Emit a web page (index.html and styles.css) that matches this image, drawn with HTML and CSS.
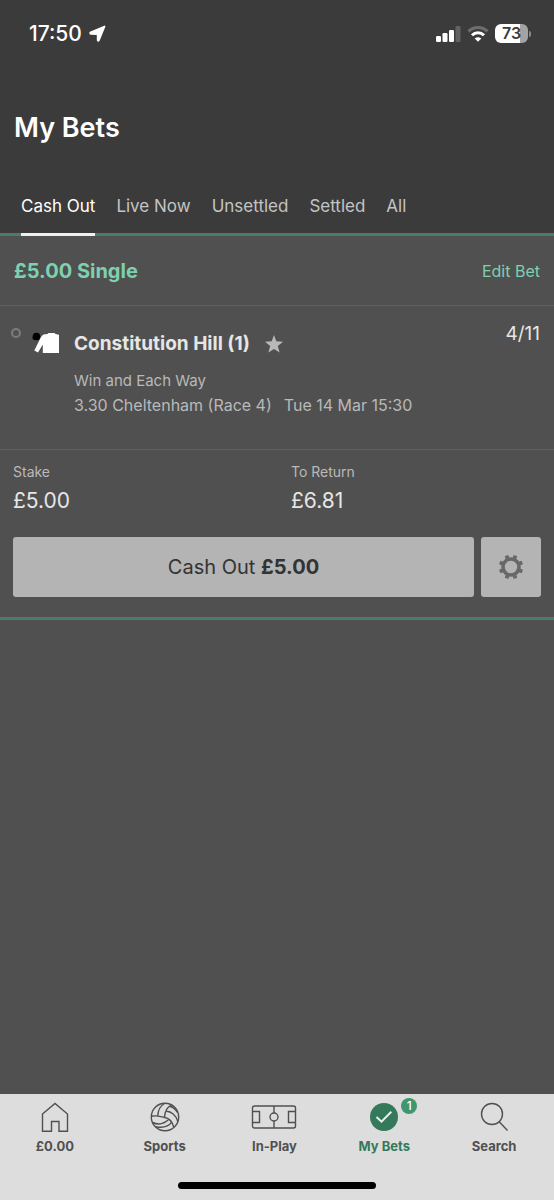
FILE: index.html
```html
<!DOCTYPE html>
<html lang="en">
<head>
  <meta charset="UTF-8">
  <meta name="viewport" content="width=device-width, initial-scale=1.0">
  <title>My Bets</title>
  <link rel="stylesheet" href="styles.css">
</head>
<body>
  <header class="header">
    <div class="status-bar">
      <div class="status-left">
        <span class="time">17:50</span>
        <svg width="17" height="17" viewBox="0 0 17 17" aria-hidden="true">
          <path d="M15.6 1.4 10 15.2Q9 16.6 8.6 15V9.2L1.8 9Q0.4 8.200 1.7 7.200Z" fill="#fff" stroke="#fff" stroke-width="1.600" stroke-linejoin="round"/>
        </svg>
      </div>
      <div class="status-right">
        <svg width="26" height="17" viewBox="0 0 26 17" aria-hidden="true">
          <rect x="1" y="11" width="5" height="6" rx="1.2" fill="#fff"/>
          <rect x="7.5" y="8" width="5" height="9" rx="1.2" fill="#fff"/>
          <rect x="14" y="5" width="5" height="12" rx="1.2" fill="#fff"/>
          <rect x="20.5" y="1" width="5" height="16" rx="1.2" fill="#626262"/>
        </svg>
        <svg width="22" height="17" viewBox="0 0 22 17" fill="none" stroke-width="3" aria-hidden="true">
          <path d="M1.5 6.4A13.4 13.4 0 0 1 20.5 6.4" stroke="#6e6e6e"/>
          <path d="M5 10.2A8.500 8.500 0 0 1 17 10.2" stroke="#fff"/>
          <path d="M11 16.8 7.7 13.4Q11 11 14.3 13.4Z" fill="#fff"/>
        </svg>
        <div class="battery"><span>73</span></div>
      </div>
    </div>
    <h1>My Bets</h1>
    <nav class="tabs">
      <a href="#" class="tab active">Cash Out</a>
      <a href="#" class="tab">Live Now</a>
      <a href="#" class="tab">Unsettled</a>
      <a href="#" class="tab">Settled</a>
      <a href="#" class="tab">All</a>
    </nav>
  </header>

  <main class="content">
    <section class="bet">
      <div class="bet-header">
        <h2>£5.00 Single</h2>
        <button type="button" class="edit-bet">Edit Bet</button>
      </div>

      <div class="selection">
        <span class="marker"></span>
        <svg class="silk" width="28" height="22" viewBox="0 0 28 22" aria-hidden="true">
          <circle cx="4.5" cy="4.5" r="3.8" fill="#000"/>
          <path d="M0.2 6 4 2 5 8 2 8Z" fill="#000"/>
          <path d="M11.5 2.5 15.5 2 16.5 1 22.5 1 23.5 2 27 2.8V21H10.8V12.500L6 20.5 2.3 18.5 8.5 6Q9.5 3.5 11.5 2.5Z" fill="#fff"/>
        </svg>
        <div class="selection-info">
          <div class="runner">
            <h3>Constitution Hill (1)</h3>
            <svg width="18" height="18" viewBox="0 0 18 18" aria-hidden="true">
              <path d="M9 0 11.3 6.3 18 6.7 12.8 10.9 14.6 17.600 9 14 3.4 17.600 5.2 10.9 0 6.7 6.7 6.3Z" fill="#b9b9b9"/>
            </svg>
          </div>
          <p class="market">Win and Each Way</p>
          <p class="event"><span>3.30 Cheltenham (Race 4)</span><span>Tue 14 Mar 15:30</span></p>
        </div>
        <span class="odds">4/11</span>
      </div>

      <div class="bet-footer">
        <dl class="amounts">
          <div>
            <dt>Stake</dt>
            <dd>£5.00</dd>
          </div>
          <div>
            <dt>To Return</dt>
            <dd>£6.81</dd>
          </div>
        </dl>
        <div class="actions">
          <button type="button" class="cash-out">Cash Out <b>£5.00</b></button>
          <button type="button" class="settings" aria-label="Cash out settings">
            <svg width="26" height="26" viewBox="-13 -13 26 26" fill="none" stroke="#686868" aria-hidden="true">
              <circle r="8" stroke-width="3.6"/>
              <path stroke-width="3.8" d="M3.4 -8.3 4.5 -11.3M8.3 -3.4 11.3 -4.5M8.3 3.4 11.3 4.5M3.4 8.3 4.5 11.3M-3.4 8.3 -4.5 11.3M-8.3 3.4 -11.3 4.5M-8.3 -3.4 -11.3 -4.5M-3.4 -8.3 -4.5 -11.3"/>
            </svg>
          </button>
        </div>
      </div>
    </section>
  </main>

  <footer class="bottom-bar">
    <nav class="bottom-nav">
      <a href="#" class="nav-item">
        <svg width="30" height="30" viewBox="0 0 30 30" aria-hidden="true">
          <path d="M2.5 12 15 1.5 27.5 12V29.3H19V19.5H11.5V29.3H2.5Z"/>
        </svg>
        <span>£0.00</span>
      </a>
      <a href="#" class="nav-item">
        <svg width="30" height="30" viewBox="0 0 30 30" aria-hidden="true">
          <circle cx="15" cy="15" r="13.7"/>
          <path d="M14.5 15.5C14.8 10 17 5 21.3 3.1M7.8 13.9C8 9 10 4 14.500 1.500M1.6 14.2C6 13 10 14.5 14.5 15.5M14.5 15.5C19 16 22 19 23.8 25.2M16.5 9.2C21 9.5 26 13 27.8 19.5M19.5 4.2C23 5 26 8 27.4 10.5M2.6 20.5C8 23 14 22 18.8 17.3M5.6 24.8C12 26 18 25.5 21.7 20.2"/>
        </svg>
        <span>Sports</span>
      </a>
      <a href="#" class="nav-item">
        <svg width="46" height="30" viewBox="0 0 46 30" aria-hidden="true">
          <rect x="1.5" y="4" width="43" height="22" rx="2"/>
          <path d="M23 4V11M23 19V26M1.5 9.5H8.5V20.5H1.5M44.5 9.5H37.5V20.5H44.5"/>
          <circle cx="23" cy="15" r="4"/>
        </svg>
        <span>In-Play</span>
      </a>
      <a href="#" class="nav-item current">
        <span class="nav-icon">
          <svg width="30" height="30" viewBox="0 0 30 30" aria-hidden="true">
            <circle class="disc" cx="15" cy="15" r="14"/>
            <path class="tick" d="M7.5 15 12.5 19.7 22.3 9.8"/>
          </svg>
          <span class="badge">1</span>
        </span>
        <span>My Bets</span>
      </a>
      <a href="#" class="nav-item">
        <svg width="30" height="30" viewBox="0 0 30 30" aria-hidden="true">
          <circle cx="13" cy="12" r="10.5"/>
          <path d="M20.2 19.8 28.5 28.5"/>
        </svg>
        <span>Search</span>
      </a>
    </nav>
    <div class="home-indicator"></div>
  </footer>
</body>
</html>
```
FILE: styles.css
```css
* {
  box-sizing: border-box;
}
html {
  height: 100%;
}
body {
  margin: 0;
  min-height: 100%;
  display: flex;
  flex-direction: column;
  font-family: Inter, "Liberation Sans", sans-serif;
  background: #505050;
  color: #e6e6e6;
}
h1, h2, h3, p, dl, dd {
  margin: 0;
}
a {
  color: inherit;
  text-decoration: none;
}
button {
  font-family: inherit;
  border: none;
  padding: 0;
  cursor: pointer;
}
svg {
  display: block;
  flex: none;
}

/* header */
.header {
  background: #3b3b3b;
  border-bottom: 3px solid #4b7b69;
}
.status-bar {
  display: flex;
  justify-content: space-between;
  align-items: center;
  height: 66px;
  padding: 0 26px 0 29px;
}
.status-left,
.status-right {
  display: flex;
  align-items: center;
  gap: 7px;
  color: #fff;
}
.time {
  font-size: 21px;
  font-weight: 500;
}
.status-right {
  gap: 6px;
}
.battery {
  position: relative;
  width: 33px;
  height: 19px;
  border-radius: 6px;
  background: linear-gradient(to right, #fff 75%, #a3a3a3 75%);
  color: #3b3b3b;
  font-size: 16px;
  font-weight: 600;
  line-height: 19px;
  text-align: center;
}
.battery::after {
  content: "";
  position: absolute;
  right: -3px;
  top: 7px;
  width: 2px;
  height: 6px;
  border-radius: 0 2px 2px 0;
  background: #8a8a8a;
}
h1 {
  padding: 0 14px;
  margin-top: 46px;
  font-size: 27px;
  font-weight: 600;
  line-height: 32px;
  color: #fff;
}
.tabs {
  display: flex;
  gap: 21px;
  padding: 0 21px;
  margin: 34px 0 -3px;
}
.tab {
  height: 58px;
  padding-top: 16px;
  font-size: 17px;
  line-height: 24px;
  color: #c4c4c4;
}
.tab.active {
  color: #fff;
  border-bottom: 3px solid #f0f0f0;
}

/* bet card */
.content {
  flex: 1;
}
.bet {
  border-bottom: 3px solid #4b7b69;
}
.bet-header {
  display: flex;
  justify-content: space-between;
  align-items: center;
  height: 70px;
  padding: 0 14px;
  border-bottom: 1px solid #5f5f5f;
}
h2 {
  font-size: 20px;
  font-weight: 700;
  line-height: 24px;
  color: #7ed0af;
}
.edit-bet {
  background: none;
  font-size: 16px;
  color: #7ed0af;
}
.selection {
  display: flex;
  align-items: flex-start;
  min-height: 144px;
  padding: 16px 14px 16px 11px;
  border-bottom: 1px solid #5f5f5f;
}
.marker {
  width: 10px;
  height: 10px;
  margin-top: 6px;
  border: 2px solid #7c7c7c;
  border-radius: 50%;
}
.silk {
  margin: 10px 14px 0 11px;
}
.selection-info {
  flex: 1;
  padding-top: 10px;
}
.runner {
  display: flex;
  align-items: center;
  gap: 15px;
  margin-bottom: 13px;
}
h3 {
  font-size: 19px;
  font-weight: 700;
  line-height: 24px;
}
.market,
.event {
  line-height: 24px;
  color: #b9b9b9;
}
.market {
  font-size: 15px;
}
.event {
  display: flex;
  flex-wrap: wrap;
  gap: 0 12px;
  font-size: 16px;
}
.odds {
  font-size: 19px;
  line-height: 24px;
}
.bet-footer {
  padding: 12px 13px 20px;
}
.amounts {
  display: grid;
  grid-template-columns: 1fr 1fr;
}
dt {
  font-size: 14px;
  line-height: 20px;
  color: #b9b9b9;
}
dd {
  font-size: 21px;
  line-height: 24px;
  margin-top: 7px;
}
.amounts > div:last-child {
  padding-left: 14px;
}
.actions {
  display: flex;
  gap: 7px;
  margin-top: 24px;
}
.cash-out,
.settings {
  height: 60px;
  border-radius: 3px;
  background: #b4b4b4;
  color: #333;
}
.cash-out {
  flex: 1;
  font-size: 20px;
}
.cash-out b {
  font-weight: 700;
}
.settings {
  width: 60px;
  display: flex;
  align-items: center;
  justify-content: center;
}

/* bottom navigation */
.bottom-bar {
  height: 106px;
  padding-top: 8px;
  background: #ddd;
}
.bottom-nav {
  display: grid;
  grid-template-columns: repeat(5, 1fr);
  padding-right: 5px;
}
.nav-item {
  display: flex;
  flex-direction: column;
  align-items: center;
  gap: 4px;
  font-size: 13px;
  font-weight: 700;
  line-height: 20px;
  color: #505050;
}
.nav-item svg {
  fill: none;
  stroke: #505050;
  stroke-width: 1.4;
}
.nav-item.current {
  color: #34795a;
}
.nav-item .disc {
  fill: #34795a;
  stroke: none;
}
.nav-item .tick {
  stroke: #eee;
  stroke-width: 2;
}
.nav-icon {
  position: relative;
}
.badge {
  position: absolute;
  left: 32px;
  top: -4px;
  width: 16px;
  height: 16px;
  border-radius: 50%;
  background: #3f9670;
  color: #fff;
  font-size: 12px;
  font-weight: 500;
  line-height: 16px;
  text-align: center;
}
.home-indicator {
  width: 198px;
  height: 7px;
  margin: 26px auto 0;
  border-radius: 4px;
  background: #000;
}
```
